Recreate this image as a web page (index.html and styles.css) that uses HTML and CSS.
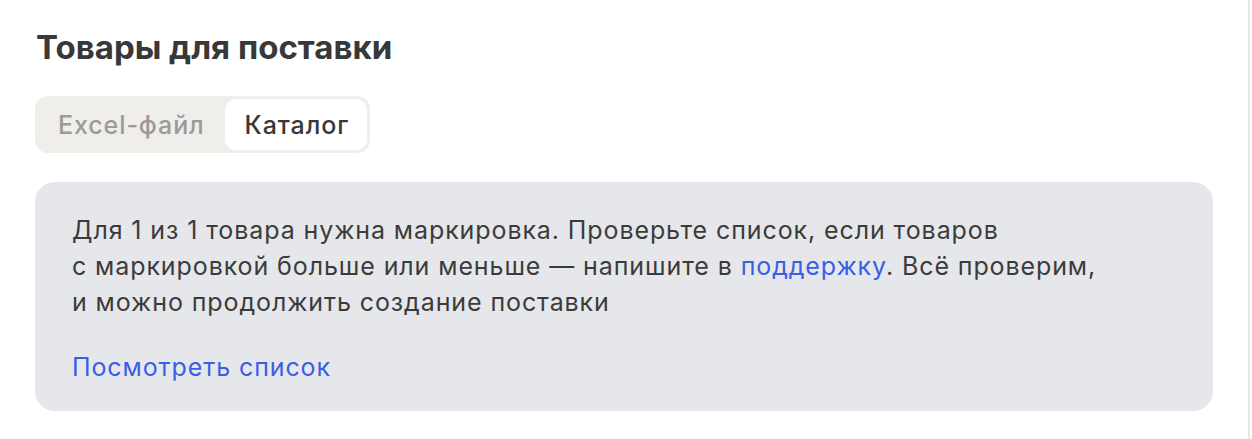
FILE: index.html
```html
<!DOCTYPE html>
<html lang="ru">
<head>
<meta charset="utf-8">
<link rel="stylesheet" href="styles.css">
</head>
<body>
<div class="page">
  <h2 class="title">Товары для поставки</h2>
  <div class="tabs">
    <div class="tab">Excel-файл</div>
    <div class="tab tab-active">Каталог</div>
  </div>
  <div class="notice">
    <p class="notice-text">Для 1 из 1 товара нужна маркировка. Проверьте список, если товаров<br>с маркировкой больше или меньше — напишите в <a class="link" href="#">поддержку</a>. Всё проверим,<br>и можно продолжить создание поставки</p>
    <a class="link notice-action" href="#">Посмотреть список</a>
  </div>
</div>
</body>
</html>
```

FILE: styles.css
```css
html, body {
  margin: 0;
  padding: 0;
  background: #ffffff;
}
body {
  font-family: "Inter", "Noto Sans", sans-serif;
  color: #3b3b3b;
}
.page {
  width: 1250px;
  min-height: 439px;
  box-sizing: border-box;
  border-right: 2px solid #e6e6e6;
  padding: 27px 35px 0 35px;
}
.title {
  margin: 0 0 0 1px;
  font-size: 33px;
  line-height: 40px;
  font-weight: 700;
  color: #383838;
}
.tabs {
  display: inline-flex;
  margin-top: 29px;
  padding: 3px;
  background: #efeeeb;
  border-radius: 13px;
}
.tab {
  height: 51px;
  display: flex;
  align-items: center;
  padding: 0 20px;
  font-size: 25px;
  letter-spacing: 0.9px;
  font-weight: 500;
  color: #9b9a97;
  border-radius: 11px;
}
.tab-active {
  background: #ffffff;
  color: #383838;
  padding: 0 18px 0 20px;
}
.notice {
  margin-top: 29px;
  background: #e6e7eb;
  border-radius: 20px;
  padding: 30px 37px 26px;
}
.notice-text {
  margin: 0;
  font-size: 25px;
  letter-spacing: 0.9px;
  line-height: 36px;
  color: #3b3b3b;
}
.link {
  color: #3a5ee6;
  text-decoration: none;
}
.notice-action {
  display: block;
  margin-top: 29px;
  font-size: 25px;
  letter-spacing: 0.9px;
  line-height: 36px;
}
```
